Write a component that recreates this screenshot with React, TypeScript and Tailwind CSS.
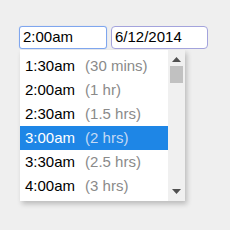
const rows = [
  { time: "1:30am", dur: "(30 mins)" },
  { time: "2:00am", dur: "(1 hr)" },
  { time: "2:30am", dur: "(1.5 hrs)" },
  { time: "3:00am", dur: "(2 hrs)", selected: true },
  { time: "3:30am", dur: "(2.5 hrs)" },
  { time: "4:00am", dur: "(3 hrs)" },
];

export default function App() {
  return (
    <div className="h-[230px] w-[230px] bg-[#efefef] font-['Liberation_Sans',Arial,sans-serif] text-[15px] text-black">
      <div className="flex gap-1 pl-[19px] pt-[26px]">
        <div className="flex h-[23px] w-[88px] items-center rounded-[3px] border border-[#7fa6ee] bg-white pl-[3px] shadow-[0_0_1px_#a9c3f4]">
          2:00am
        </div>
        <div className="flex h-[23px] w-[97px] items-center rounded-[4px] border border-[#a3a3dc] bg-white pl-[3px]">
          6/12/2014
        </div>
      </div>
      <div className="ml-[20px] mt-px flex w-[165px] bg-white shadow-[2px_3px_5px_rgba(0,0,0,0.22)]">
        <ul className="flex-1 pb-[3px] pt-[4px]">
          {rows.map((r) => (
            <li
              key={r.time}
              className={`flex h-[24px] items-center pl-[5px] ${r.selected ? "bg-[#1e86e6] text-white" : ""}`}
            >
              <span>{r.time}</span>
              <span className={`ml-[10px] ${r.selected ? "text-[#c4daf5]" : "text-[#8a8a8a]"}`}>{r.dur}</span>
            </li>
          ))}
        </ul>
        <div className="flex w-[17px] flex-col items-center bg-[#f0f0f0] py-[6px]">
          <svg width="9" height="5" viewBox="0 0 9 5" className="mt-[1px]">
            <path d="M0 5 L4.5 0 L9 5 Z" fill="#505050" />
          </svg>
          <div className="mt-[4px] h-[17px] w-[13px] bg-[#c1c1c1]" />
          <div className="flex-1" />
          <svg width="9" height="5" viewBox="0 0 9 5" className="mb-[1px]">
            <path d="M0 0 L9 0 L4.5 5 Z" fill="#505050" />
          </svg>
        </div>
      </div>
    </div>
  );
}
